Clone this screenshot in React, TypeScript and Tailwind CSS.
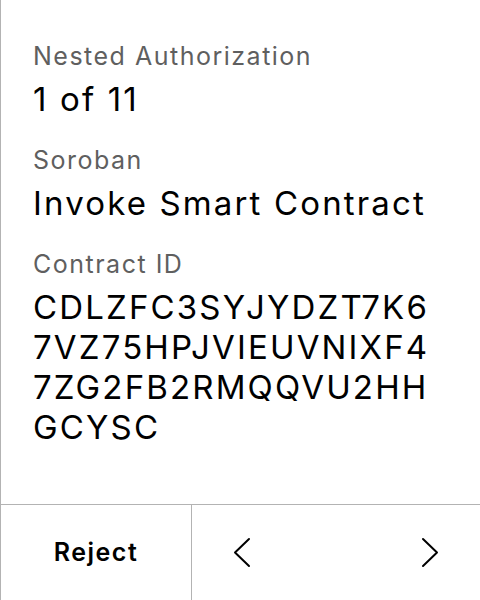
const Chevron = ({ dir }: { dir: "left" | "right" }) => (
  <svg width="16" height="29" viewBox="0 0 16 29" fill="none" className="overflow-visible">
    <polyline
      points={dir === "left" ? "15,1 1,14.5 15,28" : "1,1 15,14.5 1,28"}
      stroke="black"
      strokeWidth="2"
      strokeLinecap="round"
      strokeLinejoin="round"
    />
  </svg>
);

const Field = ({ label, lines, top }: { label: string; lines: string[]; top: string }) => (
  <div className={top}>
    <div className="text-[25px] leading-[30px] tracking-[0.06em] text-[#5f5f5f]">{label}</div>
    <div className="mt-[8px] whitespace-nowrap text-[33px] leading-[40px] tracking-[0.065em] text-black">
      {lines.map((l) => (
        <div key={l}>{l}</div>
      ))}
    </div>
  </div>
);

// contract id as it wraps on the device
const idLines = ["CDLZFC3SYJYDZT7K6", "7VZ75HPJVIEUVNIXF4", "7ZG2FB2RMQQVU2HH", "GCYSC"];

const App = () => {
  return (
    <div
      className="flex h-[600px] w-[480px] flex-col border-l border-[#b3b3b3] bg-white"
      style={{ fontFamily: "Inter, 'Noto Sans', sans-serif" }}
    >
      <div className="flex-1 pl-[32px] pt-[41px]">
        <Field label="Nested Authorization" lines={["1 of 11"]} top="" />
        <Field label="Soroban" lines={["Invoke Smart Contract"]} top="mt-[26px]" />
        <Field label="Contract ID" lines={idLines} top="mt-[26px]" />
      </div>
      <div className="flex h-[96px] border-t border-[#b3b3b3]">
        <button className="flex w-[191px] items-center justify-center border-r border-[#b3b3b3] text-[25px] font-semibold tracking-[0.06em] text-black">
          Reject
        </button>
        <div className="flex flex-1 items-center justify-between px-[42px]">
          <Chevron dir="left" />
          <Chevron dir="right" />
        </div>
      </div>
    </div>
  );
};

export default App;
